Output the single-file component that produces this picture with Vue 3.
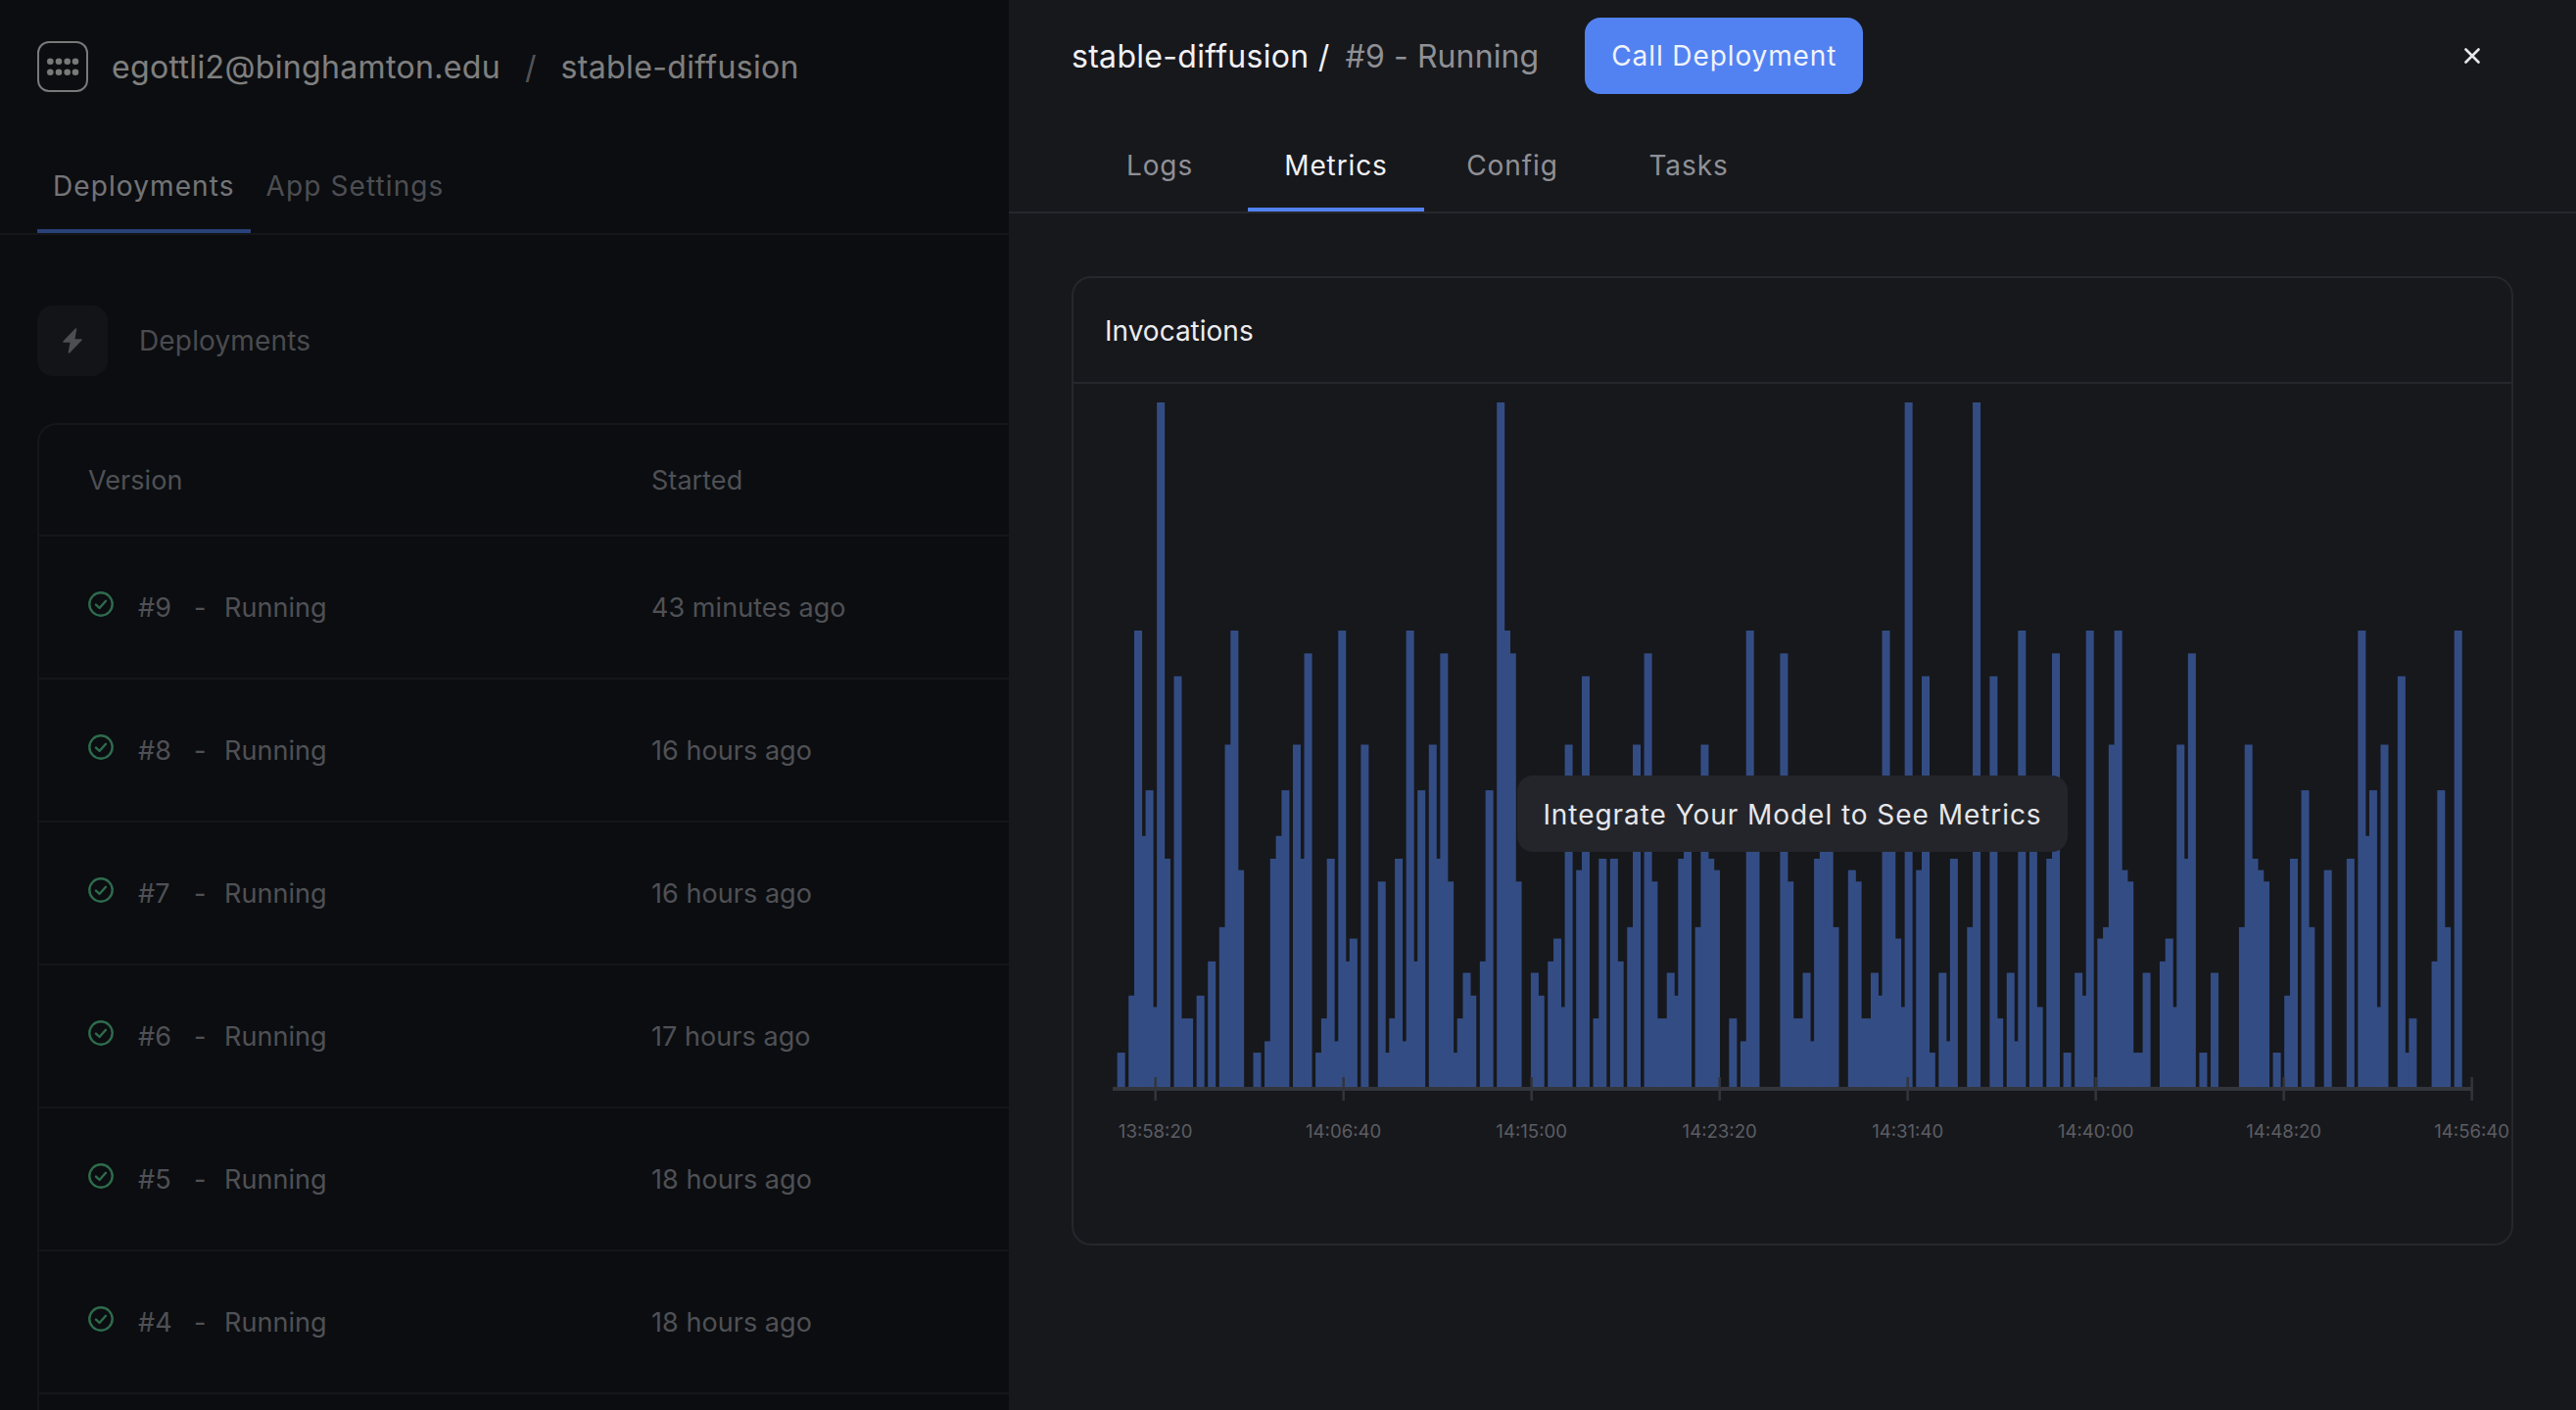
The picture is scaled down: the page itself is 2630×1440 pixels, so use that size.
<script setup>
import { computed } from 'vue'

const deployments = [
  { version: '#9', started: '43 minutes ago' },
  { version: '#8', started: '16 hours ago' },
  { version: '#7', started: '16 hours ago' },
  { version: '#6', started: '17 hours ago' },
  { version: '#5', started: '18 hours ago' },
  { version: '#4', started: '18 hours ago' }
]

const drawerTabs = ['Logs', 'Metrics', 'Config', 'Tasks']
const activeTab = 'Metrics'

// invocations per time slot, empty slots left out
const samples = {
  0: 3, 2: 8, 3: 40, 4: 22, 5: 26, 6: 7, 7: 60, 8: 20, 10: 36, 11: 6, 12: 6, 14: 8, 16: 11, 18: 14, 19: 30,
  20: 40, 21: 19, 24: 3, 26: 4, 27: 20, 28: 22, 29: 26, 31: 30, 32: 20, 33: 38, 35: 3, 36: 6, 37: 20, 38: 4,
  39: 40, 40: 11, 41: 13, 43: 30, 46: 18, 47: 3, 48: 6, 49: 20, 50: 4, 51: 40, 52: 11, 53: 26, 55: 30, 56: 20,
  57: 38, 58: 18, 59: 3, 60: 6, 61: 10, 62: 8, 64: 11, 65: 26, 67: 60, 68: 40, 69: 38, 70: 18, 73: 10, 74: 8,
  76: 11, 77: 13, 78: 7, 79: 30, 81: 19, 82: 36, 84: 6, 85: 20, 87: 20, 88: 11, 90: 14, 91: 30, 93: 38, 94: 18,
  95: 6, 96: 6, 97: 10, 98: 8, 99: 20, 100: 22, 102: 14, 103: 30, 104: 20, 105: 19, 108: 6, 110: 4, 111: 40,
  112: 22, 117: 38, 118: 18, 119: 6, 120: 6, 121: 10, 122: 4, 123: 20, 124: 22, 125: 22, 126: 14, 129: 19,
  130: 18, 131: 6, 132: 6, 133: 10, 134: 8, 135: 40, 136: 22, 137: 13, 138: 7, 139: 60, 141: 19, 142: 36,
  143: 3, 145: 10, 146: 4, 147: 20, 150: 14, 151: 60, 154: 36, 155: 6, 157: 10, 158: 4, 159: 40, 161: 22,
  162: 7, 164: 20, 165: 38, 167: 3, 169: 10, 170: 8, 171: 40, 173: 13, 174: 14, 175: 30, 176: 40, 177: 19,
  178: 18, 179: 3, 180: 3, 181: 10, 184: 11, 185: 13, 186: 7, 187: 30, 188: 20, 189: 38, 191: 3, 193: 10,
  198: 14, 199: 30, 200: 20, 201: 19, 202: 18, 204: 3, 206: 8, 207: 20, 209: 26, 210: 14, 213: 19, 217: 20,
  219: 40, 220: 22, 221: 26, 222: 7, 223: 30, 226: 36, 227: 3, 228: 6, 232: 11, 233: 26, 234: 14, 236: 40
}

// chart geometry, in the svg's own coordinates
const baseY = 718
const unit = 11.65
const firstX = 44.67
const step = 5.784

const bars = computed(() =>
  Object.entries(samples).map(([slot, value]) => ({
    x: firstX + step * Number(slot),
    y: baseY - value * unit,
    h: value * unit
  }))
)

const times = ['13:58:20', '14:06:40', '14:15:00', '14:23:20', '14:31:40', '14:40:00', '14:48:20', '14:56:40']
const ticks = times.map((label, i) => ({ label, x: 83.67 + 192 * i }))
</script>

<template>
  <div class="app">
    <div class="page">
      <header class="topbar">
        <svg class="logo" width="52" height="52" viewBox="0 0 52 52">
          <rect x="1" y="1" width="50" height="50" rx="11" fill="none" stroke="#f2f2f2" stroke-width="2" />
          <g fill="#f2f2f2">
            <circle v-for="cx in [13.3, 22, 30.7, 39]" :key="'a' + cx" :cx="cx" cy="20.7" r="3.3" />
            <circle v-for="cx in [13.3, 22, 30.7, 39]" :key="'b' + cx" :cx="cx" cy="31.7" r="3.3" />
          </g>
        </svg>
        <span class="crumb">egottli2@binghamton.edu</span>
        <span class="crumb-sep">/</span>
        <span class="crumb">stable-diffusion</span>
      </header>

      <nav class="page-tabs">
        <div class="page-tab active">Deployments</div>
        <div class="page-tab">App Settings</div>
      </nav>

      <section class="content">
        <div class="section-head">
          <div class="section-icon">
            <svg width="22" height="28" viewBox="0 0 22 28">
              <path d="M14.5 2 L2 15 L9.5 15 L7.5 26 L20 13 L12.5 13 Z" fill="#9a9ca5" stroke="#9a9ca5" stroke-width="1.6" stroke-linejoin="round" />
            </svg>
          </div>
          <span class="section-title">Deployments</span>
        </div>

        <div class="table">
          <div class="table-row table-header">
            <div class="col-version">Version</div>
            <div class="col-started">Started</div>
          </div>
          <div v-for="d in deployments" :key="d.version" class="table-row">
            <div class="col-version">
              <svg class="status" width="26" height="26" viewBox="0 0 26 26">
                <circle cx="13" cy="13" r="11.7" fill="none" stroke="#5cd69a" stroke-width="2.4" />
                <path d="M8 13.6 L11.6 17 L18 9.8" fill="none" stroke="#5cd69a" stroke-width="2.4" stroke-linecap="round" stroke-linejoin="round" />
              </svg>
              <span class="version-no">{{ d.version }}</span>
              <span class="version-dash">-</span>
              <span>Running</span>
            </div>
            <div class="col-started">{{ d.started }}</div>
          </div>
        </div>
      </section>
    </div>

    <div class="scrim"></div>

    <aside class="drawer">
      <div class="drawer-head">
        <div class="drawer-title">
          <span class="title-app">stable-diffusion /</span>
          <span class="title-run">#9 - Running</span>
        </div>
        <button class="call-btn">Call Deployment</button>
        <svg class="close" width="16" height="16" viewBox="0 0 16 16">
          <path d="M1.5 1.5 L14.5 14.5 M14.5 1.5 L1.5 14.5" stroke="#e6e7eb" stroke-width="2.6" stroke-linecap="round" />
        </svg>
      </div>

      <nav class="drawer-tabs">
        <div v-for="tab in drawerTabs" :key="tab" :class="['drawer-tab', { active: tab === activeTab }]">{{ tab }}</div>
      </nav>

      <div class="card">
        <div class="card-head">Invocations</div>
        <div class="card-body">
          <svg class="chart" width="1468" height="877" viewBox="0 0 1468 877">
            <rect v-for="(b, i) in bars" :key="i" :x="b.x" :y="b.y" width="8" :height="b.h" fill="#334d84" />
            <rect x="40" y="718" width="1388" height="4" fill="#33353d" />
            <g v-for="t in ticks" :key="t.label">
              <rect :x="t.x - 1.25" y="708" width="2.5" height="24" fill="#33353d" />
              <text class="tick-label" :x="t.x" y="770" text-anchor="middle">{{ t.label }}</text>
            </g>
          </svg>
          <div class="chart-note">Integrate Your Model to See Metrics</div>
        </div>
      </div>
    </aside>
  </div>
</template>

<style>
body {
  background: #171a20;
}
</style>

<style scoped>
.app {
  position: relative;
  width: 2630px;
  height: 1440px;
  overflow: hidden;
  font-family: Inter, "Liberation Sans", sans-serif;
  font-size: 28px;
  color: #9ea0aa;
  background: #171a20;
}

/* page underneath the drawer */
.topbar {
  display: flex;
  align-items: center;
  height: 136px;
  padding-left: 38px;
}

.logo {
  margin-right: 24px;
}

.crumb {
  font-size: 32px;
  letter-spacing: 0.35px;
  color: #ffffff;
}

.crumb-sep {
  margin: 0 25px;
  font-size: 32px;
  color: #a5a7b0;
}

.page-tabs {
  display: flex;
  height: 102px;
  padding-left: 38px;
  border-bottom: 2px solid #2a2c32;
}

.page-tab {
  padding: 0 16px;
  line-height: 108px;
  height: 102px;
  box-sizing: border-box;
  letter-spacing: 1.1px;
  color: #9a9ca5;
}

.page-tab.active {
  color: #e6e8ee;
  border-bottom: 4px solid #5284f2;
}

.content {
  padding: 72px 0 0 38px;
}

.section-head {
  display: flex;
  align-items: center;
  gap: 32px;
  margin-bottom: 48px;
}

.section-icon {
  display: flex;
  align-items: center;
  justify-content: center;
  width: 72px;
  height: 72px;
  border-radius: 16px;
  background: #26282e;
}

.section-title {
  letter-spacing: 0.15px;
  color: #94969f;
}

.table {
  width: 2400px;
  height: 1100px;
  font-size: 27px;
  letter-spacing: 0.05px;
  border: 2px solid #2a2c32;
  border-bottom: none;
  border-radius: 20px 0 0 0;
}

.table-row {
  display: flex;
  align-items: center;
  height: 146px;
  box-sizing: border-box;
  padding-left: 50px;
  border-bottom: 2px solid #2a2c32;
}

.table-header {
  height: 114px;
}

.col-version {
  display: flex;
  align-items: center;
  width: 575px;
}

.status {
  margin: -6px 25px 0 0;
}

.version-no {
  width: 57px;
}

.version-dash {
  width: 31px;
}

.scrim {
  position: absolute;
  inset: 0;
  background: rgba(0, 0, 0, 0.5);
}

/* right hand drawer */
.drawer {
  position: absolute;
  top: 0;
  right: 0;
  bottom: 0;
  width: 1600px;
  background: #17181c;
}

.drawer-head {
  display: flex;
  align-items: center;
  height: 114px;
  padding: 0 98px 0 64px;
  box-sizing: border-box;
}

.drawer-title {
  display: flex;
  gap: 16px;
  font-size: 32px;
}

.title-app {
  letter-spacing: 0.3px;
  color: #f1f1f4;
}

.title-run {
  letter-spacing: 0.1px;
  color: #8f9096;
}

.call-btn {
  height: 78px;
  margin-left: 47px;
  padding: 0 27px;
  border: none;
  border-radius: 16px;
  background: #5282f1;
  color: #f0f3fb;
  font-family: inherit;
  font-size: 28px;
  letter-spacing: 0.9px;
}

.close {
  margin-left: auto;
}

.drawer-tabs {
  display: flex;
  height: 104px;
  padding-left: 64px;
  border-bottom: 2px solid #26282d;
  box-sizing: border-box;
}

.drawer-tab {
  width: 180px;
  height: 102px;
  box-sizing: border-box;
  padding-top: 38px;
  text-align: center;
  line-height: 34px;
  letter-spacing: 0.9px;
  color: #8f9096;
}

.drawer-tab.active {
  color: #f1f1f4;
  border-bottom: 4px solid #5282f1;
}

.card {
  height: 990px;
  margin: 64px 64px 0;
  box-sizing: border-box;
  border: 2px solid #25272c;
  border-radius: 20px;
}

.card-head {
  height: 108px;
  box-sizing: border-box;
  padding: 34px 0 0 32px;
  line-height: 40px;
  color: #ececef;
  border-bottom: 2px solid #25272c;
}

.card-body {
  position: relative;
}

.chart {
  display: block;
}

.tick-label {
  font-family: Inter, "Liberation Sans", sans-serif;
  font-size: 18.6px;
  fill: #5c5d63;
}

.chart-note {
  position: absolute;
  left: 453px;
  top: 400px;
  width: 562px;
  height: 78px;
  box-sizing: border-box;
  border-radius: 16px;
  background: #24252a;
  color: #e6e6ea;
  text-align: center;
  line-height: 80px;
  letter-spacing: 0.95px;
}
</style>
